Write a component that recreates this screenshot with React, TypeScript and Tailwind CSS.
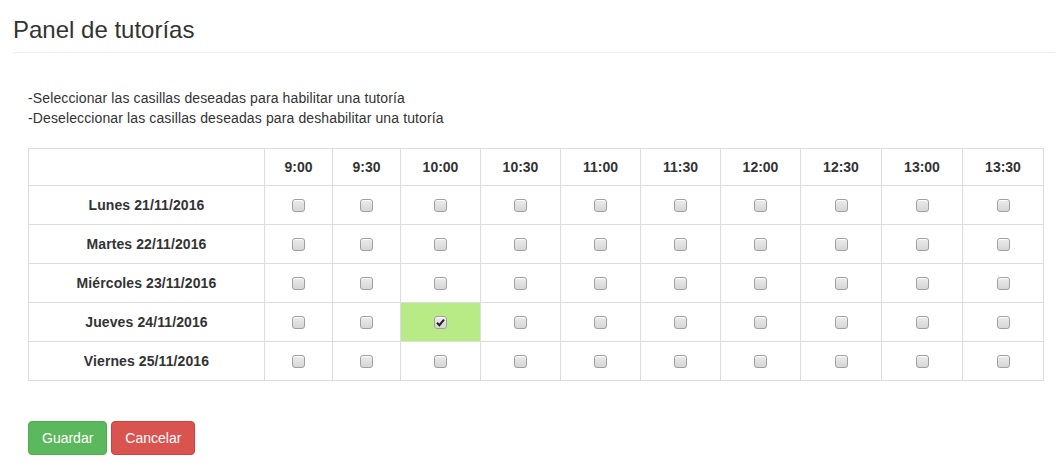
const horas = ['9:00', '9:30', '10:00', '10:30', '11:00', '11:30', '12:00', '12:30', '13:00', '13:30'];
const colWidths = ['w-[68px]', 'w-[68px]', 'w-[80px]', 'w-[80px]', 'w-[80px]', 'w-[80px]', 'w-[80px]', 'w-[81px]', 'w-[81px]', 'w-[81px]'];

const dias = [
  'Lunes 21/11/2016',
  'Martes 22/11/2016',
  'Miércoles 23/11/2016',
  'Jueves 24/11/2016',
  'Viernes 25/11/2016',
];

// Jueves 10:00 is the only one enabled
const habilitadas = new Set(['3-2']);

function Casilla({ checked }: { checked: boolean }) {
  return (
    <span className="inline-flex h-[13px] w-[13px] items-center justify-center rounded-[3px] border border-[#a0a0a0] bg-gradient-to-b from-[#ececec] to-[#d6d6d6] shadow-[inset_0_1px_0_#fff]">
      {checked && (
        <svg width="9" height="9" viewBox="0 0 9 9">
          <path d="M1 4.8 L3.4 7.2 L8 1.6" fill="none" stroke="#222" strokeWidth="2" />
        </svg>
      )}
    </span>
  );
}

export default function App() {
  return (
    <div className="min-h-[468px] bg-white font-['Liberation_Sans',Arial,sans-serif] text-[14px] leading-[20px] text-[#333]">
      {/* Header */}
      <div className="ml-[13px] mr-[2px] border-b border-[#eee] pt-[17px] pb-[9px]">
        <h3 className="text-[24px] leading-[26.4px] font-normal">Panel de tutorías</h3>
      </div>

      <div className="px-[28px]">
        {/* Instrucciones */}
        <div className="mt-[35px] tracking-[0.12px]">
          <p>-Seleccionar las casillas deseadas para habilitar una tutoría</p>
          <p>-Deseleccionar las casillas deseadas para deshabilitar una tutoría</p>
        </div>

        {/* Tabla */}
        <table className="mt-[20px] w-[1015px] table-fixed border-collapse border border-[#ddd]">
          <thead>
            <tr className="h-[37px]">
              <th className="w-[236px] border border-[#ddd]"></th>
              {horas.map((h, i) => (
                <th key={h} className={`${colWidths[i]} border border-[#ddd] text-center font-bold`}>
                  {h}
                </th>
              ))}
            </tr>
          </thead>
          <tbody>
            {dias.map((d, r) => (
              <tr key={d} className="h-[39px]">
                <td className="border border-[#ddd] text-center font-bold tracking-[0.1px]">{d}</td>
                {horas.map((h, c) => {
                  const on = habilitadas.has(`${r}-${c}`);
                  return (
                    <td
                      key={h}
                      className={`border border-[#ddd] text-center align-middle ${on ? 'bg-[#b8eb85]' : ''}`}
                    >
                      <span className="flex items-center justify-center">
                        <Casilla checked={on} />
                      </span>
                    </td>
                  );
                })}
              </tr>
            ))}
          </tbody>
        </table>

        {/* Botones */}
        <div className="mt-[40px] flex gap-[4px]">
          <button className="h-[34px] rounded-[4px] border border-[#4cae4c] bg-[#5cb85c] px-[13px] text-white">
            Guardar
          </button>
          <button className="h-[34px] rounded-[4px] border border-[#d43f3a] bg-[#d9534f] px-[13px] text-white">
            Cancelar
          </button>
        </div>
      </div>
    </div>
  );
}
